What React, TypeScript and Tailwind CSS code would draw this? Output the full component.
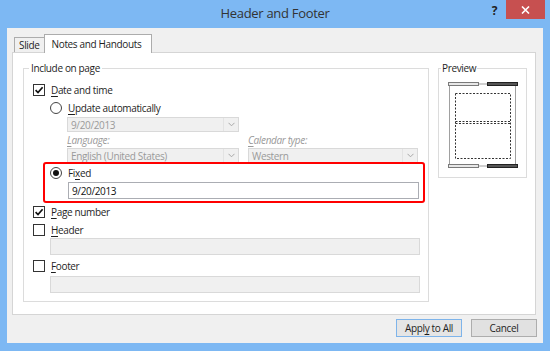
import React from 'react';

// Header and Footer dialog (Windows 8 style)

const Check = ({ checked }: { checked?: boolean }) => (
  <span className="w-[12px] h-[12px] border border-[#333] bg-white flex items-center justify-center shrink-0">
    {checked && (
      <svg width="10" height="10" viewBox="0 0 10 10">
        <path d="M1.6 5.2 L4 7.6 L8.6 2.2" fill="none" stroke="#111" strokeWidth="1.7" />
      </svg>
    )}
  </span>
);

const Radio = ({ checked }: { checked?: boolean }) => (
  <span className="w-[12px] h-[12px] rounded-full border border-[#444] bg-white flex items-center justify-center shrink-0">
    {checked && <span className="w-[6px] h-[6px] rounded-full bg-[#111]" />}
  </span>
);

const Combo = ({ value, className }: { value: string; className: string }) => (
  <div className={`h-[15px] border border-[#d9d9d9] bg-[#f0f0f0] flex ${className}`}>
    <span className="flex-1 flex items-center pl-[3px] text-[#9a9a9a]">{value}</span>
    <span className="w-[15px] border-l border-[#e3e3e3] flex items-center justify-center">
      <svg width="7" height="5" viewBox="0 0 7 5">
        <path d="M0.5 0.8 L3.5 3.8 L6.5 0.8" fill="none" stroke="#a8a8a8" strokeWidth="1" />
      </svg>
    </span>
  </div>
);

const Key = ({ children }: { children: React.ReactNode }) => (
  <span className="underline underline-offset-[2px]">{children}</span>
);

const PreviewPage = () => (
  <svg width="70" height="87" viewBox="0 0 70 87">
    <rect x="1.5" y="2" width="66" height="82" fill="#fff" stroke="#a0a0a0" strokeWidth="1" />
    <rect x="0.5" y="0.5" width="30" height="3" fill="#e8e8e8" stroke="#7a7a7a" strokeWidth="1" />
    <rect x="39.5" y="0.5" width="30" height="3" fill="#555" stroke="#222" strokeWidth="1" />
    <rect x="0.5" y="82.5" width="30" height="3" fill="#e8e8e8" stroke="#7a7a7a" strokeWidth="1" />
    <rect x="39.5" y="82.5" width="30" height="3" fill="#555" stroke="#222" strokeWidth="1" />
    <g fill="none" stroke="#333" strokeWidth="1" strokeDasharray="2 1.5">
      <rect x="7.5" y="11.5" width="55" height="65" />
      <line x1="7.5" y1="39.5" x2="62.5" y2="39.5" />
      <line x1="7.5" y1="41.5" x2="62.5" y2="41.5" />
    </g>
  </svg>
);

export default function App() {
  return (
    <div className="w-[550px] h-[351px] bg-[#7db8f3] flex flex-col font-['Open_Sans','Noto_Sans',sans-serif] text-[10px] tracking-[-0.35px] text-[#1e1e1e] leading-none select-none overflow-hidden">
      {/* title bar */}
      <div className="h-[28px] grid grid-cols-[1fr_auto_1fr] shrink-0">
        <div />
        <div className="self-center text-[13px] tracking-[-0.3px] text-[#333] pb-[1px]">Header and Footer</div>
        <div className="flex justify-end items-start">
          <span className="mt-[5px] mr-[9px] text-[12px] font-bold text-[#222]">?</span>
          <div className="w-[39px] h-[19px] mr-[5px] bg-[#c75050] flex items-center justify-center">
            <svg width="9" height="8" viewBox="0 0 9 8">
              <path d="M1 0.5 L8 7.5 M8 0.5 L1 7.5" stroke="#fff" strokeWidth="1.6" />
            </svg>
          </div>
        </div>
      </div>

      {/* client area */}
      <div className="mx-[7px] h-[315px] bg-[#f0f0f0] pl-[5px] pr-[7px] flex flex-col">
        {/* tabs */}
        <div className="h-[24px] flex items-end pl-[2px] shrink-0">
          <div className="h-[15px] px-[4px] border border-b-0 border-[#acacac] bg-[#f0f0f0] flex items-center">Slide</div>
          <div className="relative z-10 h-[19px] -mb-[1px] pl-[7px] pr-[10px] border border-b-0 border-[#acacac] bg-white flex items-center -ml-[1px]">
            Notes and Handouts
          </div>
        </div>

        {/* panel */}
        <div className="h-[263px] border border-[#d5d5d5] bg-white flex items-start pl-[10px] pt-[8px]">
          <fieldset className="w-[406px] border border-[#dcdcdc] pb-[8px]">
            <legend className="ml-[5px] px-[2px] h-[14px] leading-[14px]">Include on page</legend>
            <div className="pl-[9px] pt-[5px] flex flex-col">
              <div className="h-[19px] flex items-center gap-[6px]">
                <Check checked />
                <span><Key>D</Key>ate and time</span>
              </div>
              <div className="h-[17px] flex items-center gap-[6px] ml-[17px]">
                <Radio />
                <span><Key>U</Key>pdate automatically</span>
              </div>
              <Combo value="9/20/2013" className="ml-[34px] w-[172px] mt-[1px]" />
              <div className="h-[16px] flex items-center ml-[34px] italic text-[#9a9a9a]">
                <span className="w-[181px]"><Key>L</Key>anguage:</span>
                <span><Key>C</Key>alendar type:</span>
              </div>
              <div className="flex ml-[34px] gap-[9px]">
                <Combo value="English (United States)" className="w-[172px]" />
                <Combo value="Western" className="w-[170px]" />
              </div>
              <div className="-mt-[1px] ml-[10px] w-[382px] border-2 border-[#ff0000] rounded-[3px] pl-[5px] pb-[2px] relative">
                <div className="h-[18px] flex items-center gap-[6px]">
                  <Radio checked />
                  <span>Fi<Key>x</Key>ed</span>
                </div>
                <div className="ml-[18px] mr-[4px] h-[17px] border border-[#abadb3] bg-white flex items-center pl-[3px] text-[#111]">
                  9/20/2013
                </div>
              </div>
              <div className="h-[18px] flex items-center gap-[6px]">
                <Check checked />
                <span><Key>P</Key>age number</span>
              </div>
              <div className="h-[17px] flex items-center gap-[6px]">
                <Check />
                <span><Key>H</Key>eader</span>
              </div>
              <div className="ml-[17px] w-[370px] h-[17px] border border-[#d9d9d9] bg-[#f0f0f0]" />
              <div className="h-[21px] flex items-center gap-[6px]">
                <Check />
                <span><Key>F</Key>ooter</span>
              </div>
              <div className="ml-[17px] w-[370px] h-[17px] border border-[#d9d9d9] bg-[#f0f0f0]" />
            </div>
          </fieldset>

          <fieldset className="ml-[9px] w-[89px] border border-[#dcdcdc] pb-[8px]">
            <legend className="ml-[2px] px-[1px] h-[14px] leading-[14px]">Preview</legend>
            <div className="ml-[9px] mt-[7px]">
              <PreviewPage />
            </div>
          </fieldset>
        </div>

        {/* buttons */}
        <div className="mt-[4px] flex justify-end gap-[9px] -mr-[1px]">
          <button className="w-[66px] h-[18px] border border-[#7eb4ea] bg-[#e5e5e5] flex items-center justify-center">
            Appl<Key>y</Key>&nbsp;to All
          </button>
          <button className="w-[66px] h-[18px] border border-[#adadad] bg-[#e1e1e1] flex items-center justify-center">
            Cancel
          </button>
        </div>
      </div>
    </div>
  );
}
